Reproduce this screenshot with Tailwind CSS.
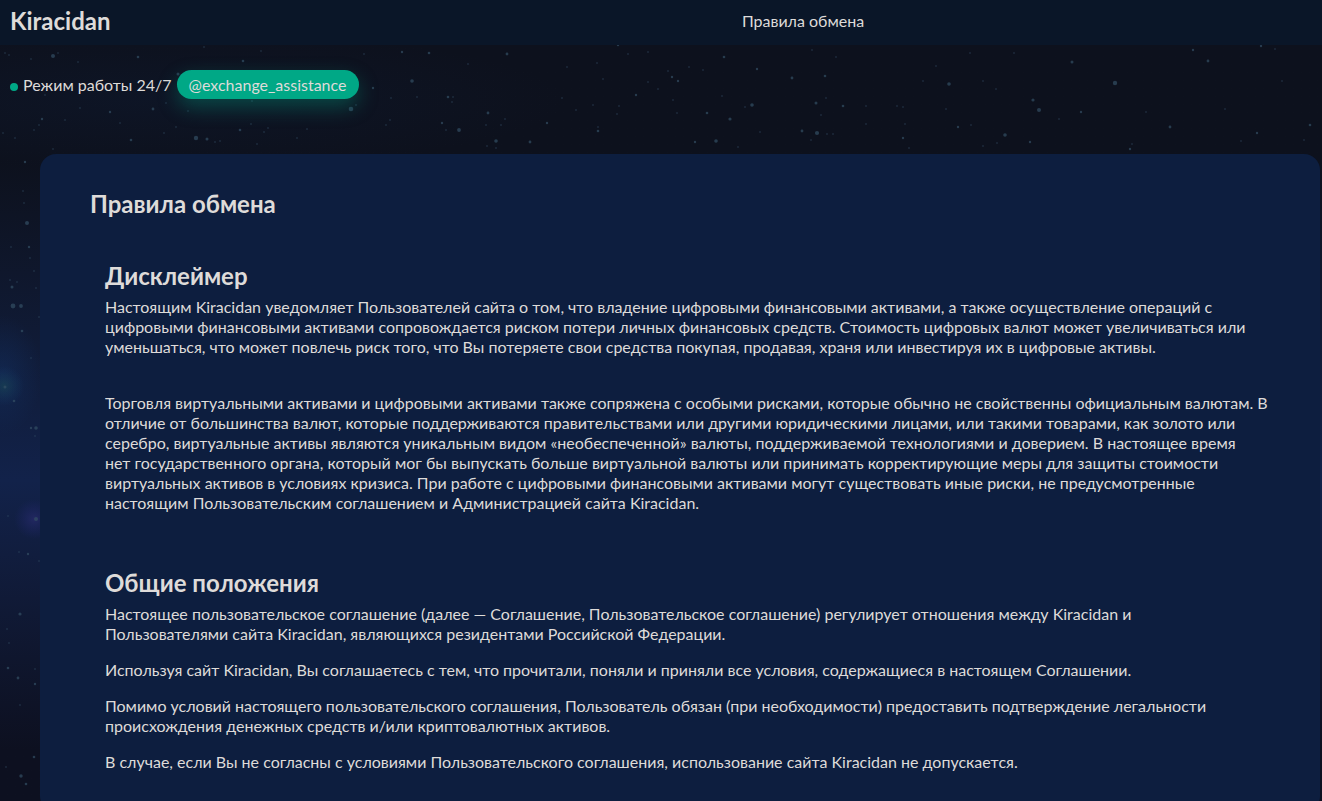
<!DOCTYPE html>
<html lang="ru">
<head>
  <meta charset="UTF-8" />
  <meta name="viewport" content="width=device-width, initial-scale=1.0"/>
  <title>Kiracidan</title>
  <script src="https://cdn.jsdelivr.net/npm/@tailwindcss/browser@4"></script>
</head>
<body class="relative isolate min-h-screen overflow-x-hidden bg-[#0c101c] font-[Lato,sans-serif] text-base leading-5 text-[#dedbd9]">

  <!-- Night sky -->
  <div class="absolute inset-0 -z-10 overflow-hidden bg-linear-to-b from-[#0d111d] from-[160px] via-[#12224a] via-[480px] to-[#0d1020] to-[750px]" aria-hidden="true">
    <svg class="absolute top-0 left-0 h-full w-full">
      <defs>
        <radialGradient id="teal">
          <stop offset="0" stop-color="#1c5058" stop-opacity="0.5"/>
          <stop offset="1" stop-color="#17406f" stop-opacity="0"/>
        </radialGradient>
        <radialGradient id="violet">
          <stop offset="0" stop-color="#262a68" stop-opacity="0.8"/>
          <stop offset="1" stop-color="#1c2467" stop-opacity="0"/>
        </radialGradient>
        <radialGradient id="haze">
          <stop offset="0" stop-color="#123062" stop-opacity="0.5"/>
          <stop offset="1" stop-color="#123062" stop-opacity="0"/>
        </radialGradient>
      </defs>
      <ellipse cx="150" cy="100" rx="420" ry="70" fill="url(#haze)" opacity="0.25"/>
      <ellipse cx="2" cy="375" rx="40" ry="60" fill="url(#haze)"/>
      <circle cx="4" cy="386" r="20" fill="url(#teal)"/>
      <circle cx="34" cy="519" r="20" fill="url(#violet)"/>
      <g id="stars" fill="#334e64"></g>
    </svg>
  </div>

  <!-- Header -->
  <header class="flex min-h-[45px] items-center bg-[#0a1628] px-[10px] pb-1">
    <a href="#" class="w-[284px] text-2xl leading-8 font-bold">Kiracidan</a>
    <nav class="flex-1 text-center">
      <a href="#rules" class="hover:text-white">Правила обмена</a>
    </nav>
  </header>

  <!-- Status -->
  <div class="flex items-center px-[10px] pt-[25px]">
    <span class="mt-1 mr-[5px] size-2 rounded-full bg-[#00a886]"></span>
    <span class="mr-[5px]">Режим работы 24/7</span>
    <a href="#" class="rounded-full bg-[#00a886] px-3 py-1 leading-[21px] shadow-[0_8px_20px_rgba(0,168,134,0.35)]">@exchange_assistance</a>
  </div>

  <!-- Rules -->
  <main id="rules" class="mt-[55px] mr-[2px] ml-10 rounded-2xl bg-[#0d1e3f] px-[50px] pt-[34px] pb-10">
    <h1 class="text-2xl leading-8 font-bold">Правила обмена</h1>

    <div class="pl-[15px]">
      <section class="mt-10">
        <h2 class="text-2xl leading-8 font-bold">Дисклеймер</h2>
        <p class="mt-[5px]">Настоящим Kiracidan уведомляет Пользователей сайта о том, что владение цифровыми финансовыми активами, а также осуществление операций с цифровыми финансовыми активами сопровождается риском потери личных финансовых средств. Стоимость цифровых валют может увеличиваться или уменьшаться, что может повлечь риск того, что Вы потеряете свои средства покупая, продавая, храня или инвестируя их в цифровые активы.</p>
        <p class="mt-9">Торговля виртуальными активами и цифровыми активами также сопряжена с особыми рисками, которые обычно не свойственны официальным валютам. В отличие от большинства валют, которые поддерживаются правительствами или другими юридическими лицами, или такими товарами, как золото или серебро, виртуальные активы являются уникальным видом «необеспеченной» валюты, поддерживаемой технологиями и доверием. В настоящее время<br>нет государственного органа, который мог бы выпускать больше виртуальной валюты или принимать корректирующие меры для защиты стоимости виртуальных активов в условиях кризиса. При работе с цифровыми финансовыми активами могут существовать иные риски, не предусмотренные настоящим Пользовательским соглашением и Администрацией сайта Kiracidan.</p>
      </section>

      <section class="mt-[54px] pr-[15px]">
        <h2 class="text-2xl leading-8 font-bold">Общие положения</h2>
        <p class="mt-[5px]">Настоящее пользовательское соглашение (далее — Соглашение, Пользовательское соглашение) регулирует отношения между Kiracidan и Пользователями сайта Kiracidan, являющихся резидентами Российской Федерации.</p>
        <p class="mt-4">Используя сайт Kiracidan, Вы соглашаетесь с тем, что прочитали, поняли и приняли все условия, содержащиеся в настоящем Соглашении.</p>
        <p class="mt-4">Помимо условий настоящего пользовательского соглашения, Пользователь обязан (при необходимости) предоставить подтверждение легальности происхождения денежных средств и/или криптовалютных активов.</p>
        <p class="mt-4">В случае, если Вы не согласны с условиями Пользовательского соглашения, использование сайта Kiracidan не допускается.</p>
      </section>
    </div>
  </main>

  <script>
    // x, y, radius
    const stars = [
      [5,53,1],[9,55,1],[31,59,1],[53,56,2],[58,53,1],[78,62,1],[138,57,1.3],[204,47,1],[243,61,1.3],[261,51,1],[364,54,1],[402,52,1.2],[429,53,1.3],
      [178,74,1.5],[45,95,1],[80,108,1],[110,112,1.2],[153,109,1.4],[166,103,1],[188,111,1],[252,101,1],[351,109,2.3],[356,105,1],[373,88,1.2],[391,98,1],[412,81,1.8],[417,97,1],
      [42,119,1.2],[34,130,1],[39,125,1],[65,120,1],[120,123,1],[131,140,1.3],[164,133,1],[176,127,1],[196,138,2.2],[207,139,1.5],[215,142,1],[220,141,1],[240,130,1.3],[251,124,1],[264,132,1],[268,128,1],[307,129,1],[297,138,1],[257,144,1],[386,125,1],[390,120,1],[3,133,1],[53,149,1],[15,138,1],
      [468,64,1],[453,97,1],[448,97,1.3],[452,102,1],[488,113,1.4],[442,123,1.2],[459,130,1.9],[446,130,1],[486,125,1],[505,119,1],[501,125,1],[496,141,1.8],[496,148,1],[487,146,1],[530,142,1.4],[547,123,1.2],[562,98,1],[593,105,1],[576,110,1],[598,131,1.3],[598,127,1],
      [507,54,1.4],[618,45,1.2],[628,54,1],[648,52,1],[567,67,1],[597,63,1],[603,79,1],[636,95,1.2],[619,106,1],[617,114,1],[668,71,1],[672,77,1.2],[678,81,1.2],[648,82,1],[658,89,1],[689,67,1],[703,70,1],[724,57,1.3],[673,100,1],[677,113,1],[707,113,1.3],[722,96,1],[730,119,1.6],[752,105,1.8],[745,107,1],[716,141,1.8],[695,142,1.2],[738,147,1],
      [757,69,1.2],[792,78,1.4],[812,50,1],[825,76,1.3],[836,57,1],[816,103,1.5],[821,115,1],[826,98,1],[843,106,1.3],[817,133,2.1],[802,131,1.4],[811,140,1],[827,134,1],[833,134,1],[866,106,1],[866,124,1],[760,132,1],
      [923,81,1],[949,84,1.8],[936,66,1],[970,53,1],[1014,53,1],[1072,62,1.5],[1115,83,2.2],[996,89,1],[983,81,1],[1033,100,1.6],[1039,110,2],[1059,119,1],[1081,112,1.2],[946,109,1],[958,127,1.2],[971,125,1],[1005,135,1.8],[997,143,1],[1030,142,1.2],[903,138,1.2],[903,107,1],[897,106,1],[905,124,1],[909,148,1],[983,146,1],
      [1146,112,1],[1170,127,1.4],[1225,109,1],[1193,50,1.2],[1208,61,1.4],[1261,46,1.2],[1275,49,1],[1282,81,1],[1310,125,1.3],[1257,133,1.2],[1304,140,1],[1241,141,1],[1130,149,1.2],[1132,144,1],
      [25,162,1.2],[23,191,1],[24,203,1],[27,223,2],[11,247,1],[29,247,1.2],[30,258,1],[34,271,1],[10,280,1],[17,282,1],[12,287,1.5],[36,288,1],[13,306,2.4],[21,306,1.9],[39,317,1],[22,331,1.3],
      [31,358,1],[14,401,1.3],[31,428,1.2],[36,428,1.8],[35,436,1],[8,516,1],[36,519,2],[28,554,1.2],[39,561,1],[19,552,1],[20,614,1.6],[7,629,1],[8,668,1.3],[18,678,1.4],[35,684,1.2],[9,643,1],[35,669,1],[20,705,1],[34,757,1.3],[21,776,1.7],[26,784,1.3],[6,767,1],[5,387,1.5]
    ];

    const group = document.getElementById('stars');
    stars.forEach(([x, y, r]) => {
      const star = document.createElementNS('http://www.w3.org/2000/svg', 'circle');
      star.setAttribute('cx', x);
      star.setAttribute('cy', y);
      star.setAttribute('r', r);
      star.setAttribute('opacity', r > 1 ? 0.7 : 0.4);
      group.appendChild(star);
    });
  </script>
</body>
</html>
